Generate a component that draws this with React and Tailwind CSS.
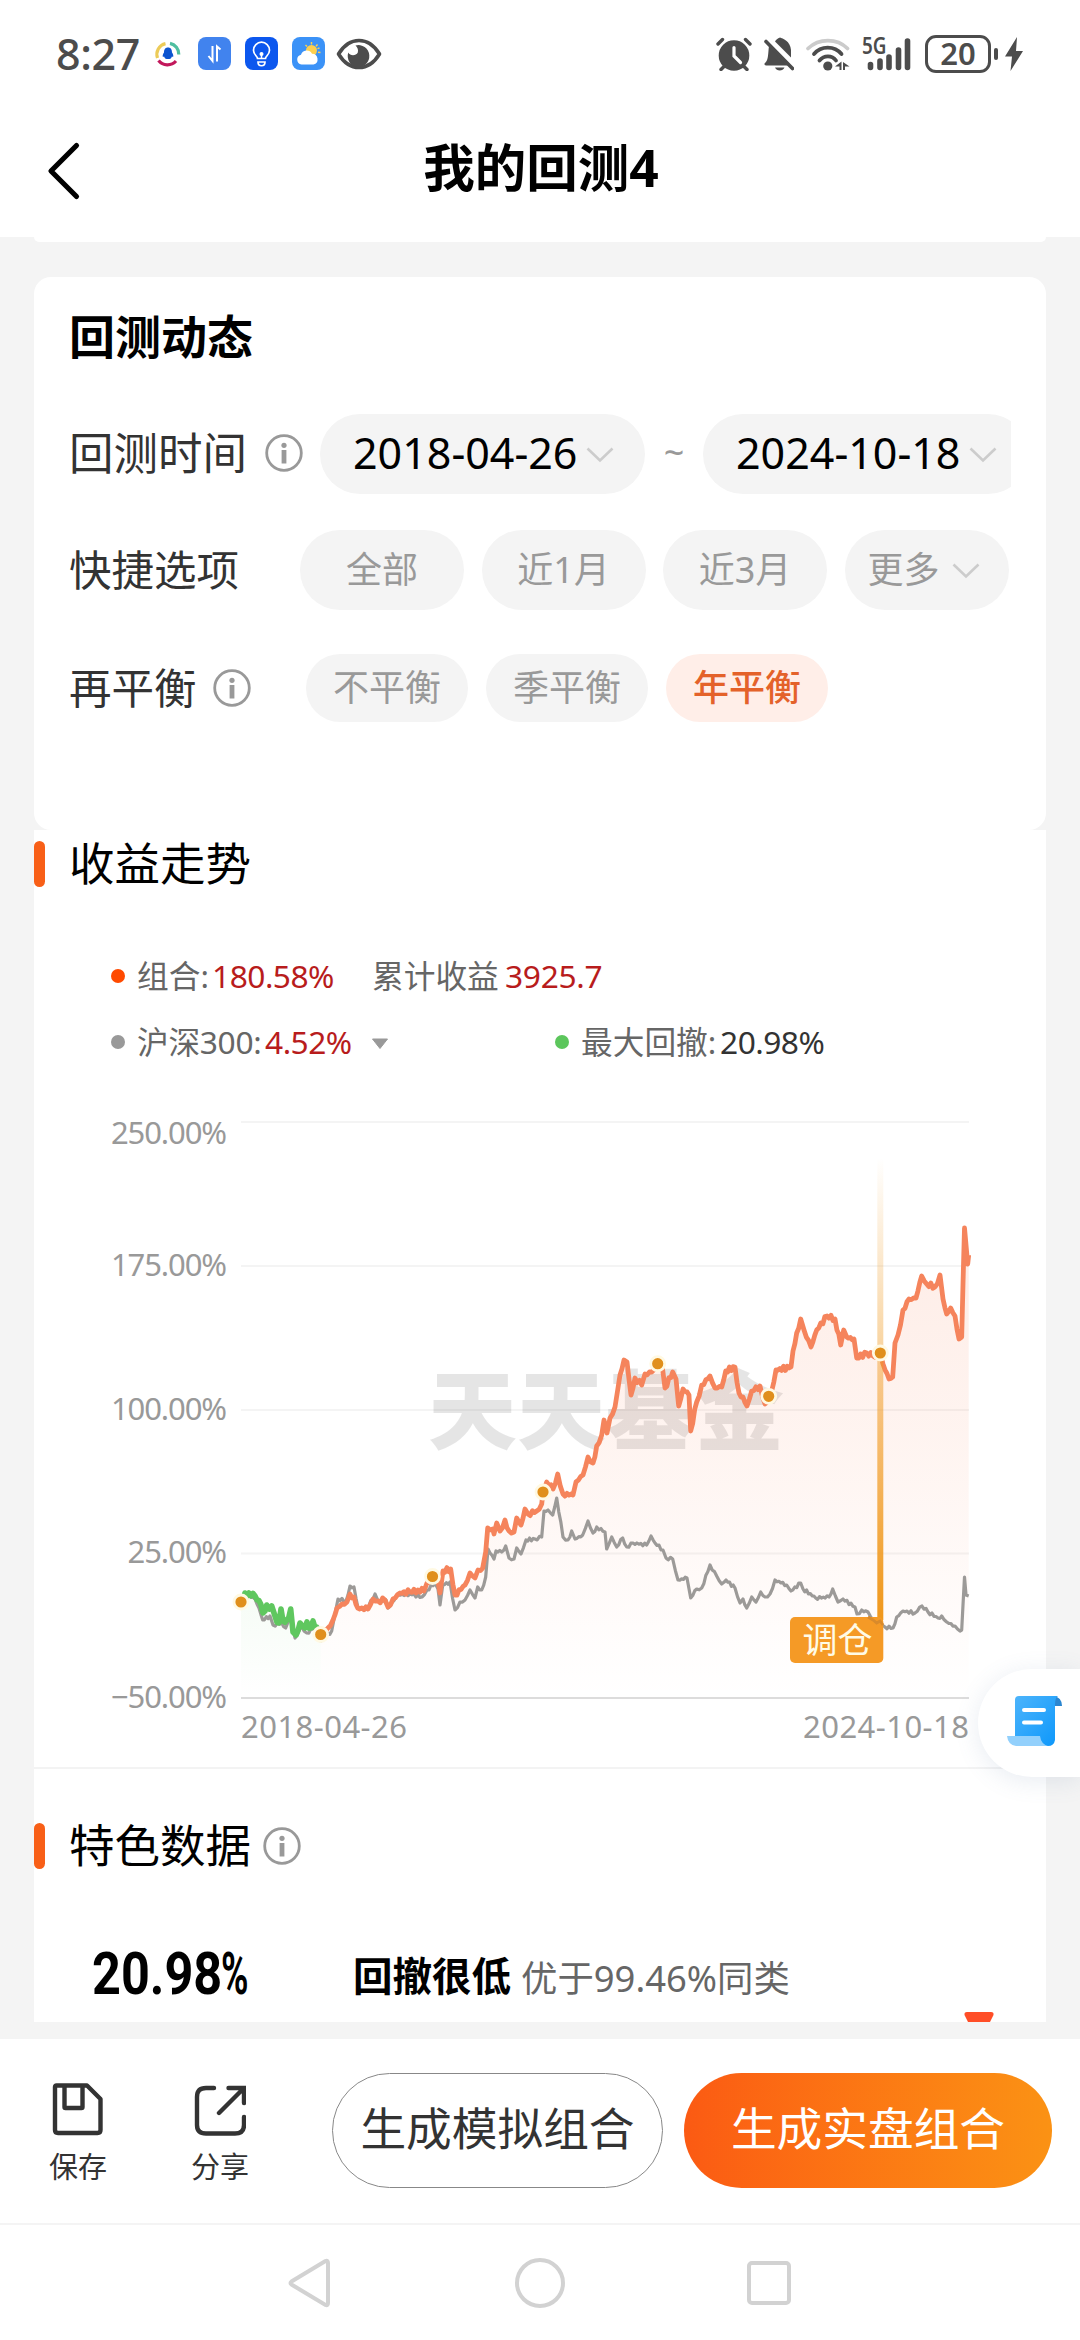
import React from 'react';

// Net value curve of the portfolio during the max drawdown
const drawdown = [
  [241, 1602], [245, 1593], [255, 1596], [260.7, 1604], [263, 1613], [266.7, 1605], [271.7, 1606], [275, 1616],
  [279, 1623], [281, 1609], [283, 1621], [286.7, 1620], [290.7, 1609], [293, 1632], [296, 1635], [300, 1623],
  [305, 1628], [307, 1622], [310.7, 1628], [313, 1621], [316.7, 1627], [320.7, 1634],
];

const portfolio = [
  [320.7, 1634], [328, 1628], [333, 1620], [337, 1608], [342, 1604], [347, 1602], [350, 1594], [354, 1597],
  [357.7, 1608], [368, 1609], [373, 1599], [378, 1601], [385, 1600], [388, 1607], [393, 1599], [400, 1593],
  [410, 1592], [418, 1590], [424, 1591], [427, 1583], [432.5, 1576], [438, 1582], [440, 1593], [443, 1571],
  [450.7, 1569], [455, 1595], [465, 1585], [470, 1573], [475, 1578], [478, 1570], [482.7, 1568], [485.7, 1552],
  [487.7, 1528], [492.7, 1529], [494, 1534], [496.7, 1523], [500, 1531], [505, 1520], [509, 1531], [514, 1532],
  [516.7, 1518], [521, 1525], [525, 1509], [528, 1514], [536.7, 1511], [541.7, 1504], [543, 1492], [546.7, 1482],
  [553, 1489], [557.7, 1474], [563, 1494], [573, 1495], [576, 1482], [583, 1475], [588, 1457], [593, 1463],
  [596.7, 1446], [601.7, 1435], [604, 1420], [607, 1433], [610, 1418], [615, 1407], [618, 1388], [620, 1375],
  [624, 1360], [627, 1362], [631, 1395], [635, 1378], [641.7, 1385], [645, 1374], [651.7, 1372], [657.7, 1364],
  [662.7, 1370], [665, 1388], [672.7, 1372], [676, 1379], [678.7, 1406], [683, 1389], [689, 1395], [690.7, 1431],
  [696.7, 1402], [701.7, 1385], [710, 1376], [715, 1388], [721.7, 1387], [725.7, 1371], [735, 1367], [739, 1393],
  [743, 1397], [747, 1406], [751.7, 1391], [760, 1386], [765, 1404], [768.7, 1396], [771.7, 1391], [776, 1370],
  [791, 1367], [793, 1351], [796.7, 1333], [800.7, 1319], [804, 1330], [811, 1347], [816.7, 1330], [827, 1316],
  [835, 1319], [840.7, 1345], [843.7, 1330], [846.7, 1337], [854, 1339], [856.7, 1358], [866.7, 1353], [873, 1356],
  [880, 1353], [883, 1364], [889, 1379], [892.7, 1377], [895, 1343], [898, 1335], [903, 1310], [909, 1299],
  [916, 1298], [921.7, 1276], [926.7, 1284], [935, 1287], [940, 1275], [943, 1299], [946.7, 1314], [950.7, 1308],
  [955, 1316], [959, 1339], [961.7, 1337], [963, 1284], [964.5, 1228], [966, 1245], [967.7, 1264], [968.7, 1255],
];

const hs300 = [
  [241, 1602], [245, 1594], [255, 1599], [259, 1608], [262.7, 1620], [270, 1616], [273, 1625], [281.7, 1623],
  [285.7, 1628], [290, 1616], [295, 1638], [301.7, 1627], [306.7, 1633], [315, 1627], [320.7, 1641], [331.7, 1631],
  [335, 1614], [338, 1599], [346, 1601], [350, 1586], [354, 1587], [358, 1608], [366.7, 1609], [375, 1594],
  [378, 1601], [386, 1600], [388, 1608], [398, 1595], [410, 1594], [422, 1597], [427, 1590], [435, 1583],
  [438, 1589], [440, 1605], [442.7, 1585], [450, 1582], [452.7, 1599], [455, 1610], [460, 1602], [465, 1600],
  [470, 1590], [475, 1598], [477.7, 1587], [481.7, 1590], [485.7, 1577], [488, 1549], [494, 1559], [496, 1551],
  [501.7, 1552], [505.7, 1546], [509, 1558], [514, 1559], [516.7, 1548], [521, 1554], [526, 1540], [535, 1539],
  [541.7, 1537], [544, 1511], [548, 1510], [552.7, 1515], [556.7, 1498], [563, 1537], [568, 1540], [571.7, 1531],
  [575, 1539], [582.7, 1535], [588, 1521], [593, 1533], [596.7, 1527], [605, 1532], [606.7, 1549], [611.7, 1537],
  [616.7, 1547], [622.7, 1538], [626.7, 1547], [633, 1543], [646.7, 1545], [651, 1536], [655, 1543], [663, 1550],
  [666, 1558], [672.7, 1559], [678, 1580], [687, 1578], [690.7, 1598], [696.7, 1589], [701.7, 1588], [710, 1565],
  [716.7, 1576], [721.7, 1584], [726, 1580], [735, 1588], [740, 1603], [743, 1599], [746.7, 1608], [751.7, 1597],
  [756, 1602], [760.7, 1592], [765, 1597], [770, 1594], [775, 1580], [786.7, 1585], [791, 1591], [800.7, 1583],
  [803, 1589], [815.7, 1598], [829, 1597], [832.7, 1589], [838, 1602], [843, 1599], [855, 1607], [857, 1614],
  [861.7, 1610], [868, 1612], [873, 1620], [876.7, 1623], [880, 1621], [885, 1627], [893, 1628], [896.7, 1617],
  [903, 1611], [915, 1613], [922, 1606], [928, 1612], [938, 1618], [941.7, 1616], [946.7, 1622], [955, 1626],
  [960, 1631], [961.7, 1630], [963, 1605], [964.5, 1577], [966, 1595], [968.7, 1596],
];

const markers = [[241, 1602], [320.7, 1634.5], [432.5, 1576.5], [543, 1492], [657.7, 1363.7], [768.7, 1396.3], [880.3, 1353]];

const yAxis = [
  { label: '250.00%', line: 1122, base: 1144 },
  { label: '175.00%', line: 1266, base: 1276 },
  { label: '100.00%', line: 1410, base: 1419.5 },
  { label: '25.00%', line: 1553.5, base: 1563 },
  { label: '−50.00%', line: 1698, base: 1707.5 },
];

// Daily noise between the sampled points
const toPath = (points, noise) => {
  let d = `M${points[0][0]} ${points[0][1]}`;
  for (let i = 1; i < points.length; i++) {
    const [x0, y0] = points[i - 1];
    const [x1, y1] = points[i];
    const steps = Math.floor((x1 - x0) / 1.8);
    for (let s = 1; s < steps; s++) {
      const t = s / steps;
      const wave = (s % 2 ? 1 : -1) * noise * (0.6 + 0.4 * Math.sin(i * 7.3 + s));
      d += `L${(x0 + (x1 - x0) * t).toFixed(1)} ${(y0 + (y1 - y0) * t + wave).toFixed(1)}`;
    }
    d += `L${x1} ${y1}`;
  }
  return d;
};

const InfoIcon = ({ className }) => (
  <svg viewBox="0 0 38 38" className={`w-[38px] h-[38px] shrink-0 ${className || ''}`}>
    <circle cx="19" cy="19" r="17.3" fill="none" stroke="#999" strokeWidth="2.8" />
    <circle cx="19" cy="11.3" r="2.6" fill="#999" />
    <rect x="16.6" y="16" width="4.8" height="13.5" fill="#999" />
  </svg>
);

const Chevron = ({ className }) => (
  <svg viewBox="0 0 28 16" className={`w-[28px] h-[16px] shrink-0 ${className}`}>
    <path d="M1.5 1.5L14 13.5L26.5 1.5" fill="none" stroke="#ccc" strokeWidth="2.6" />
  </svg>
);

const StatusBar = () => (
  <div className="h-[107px] flex items-center text-[#4c4c4c]">
    <span className="ml-[56px] w-[97px] text-[43px] leading-none tracking-[-0.4px] font-medium">8:27</span>
    <svg viewBox="0 0 30 30" className="w-[30px] h-[30px]">
      <path d="M4.5 19A11 11 0 0 1 12.5 4.6" fill="none" stroke="#eccb58" strokeWidth="3.2" />
      <path d="M17 4.4A11 11 0 0 1 25.8 15.5" fill="none" stroke="#4fbfa0" strokeWidth="3.2" />
      <path d="M5.5 21.5A11.5 11.5 0 0 0 23 22" fill="none" stroke="#c2185b" strokeWidth="3.2" />
      <path d="M15 8.5c-3 0-4 2.3-4 5c-1 1.5-1.6 3-1.2 4.3c.3.5.8 0 1.2-.5c.3 1.2.8 1.7 1.2 2.2c1.6.8 4 .8 5.6 0c.4-.5.9-1 1.2-2.2c.4.5.9 1 1.2.5c.4-1.3-.2-2.8-1.2-4.3c0-2.7-1-5-4-5Z" fill="#0b54d0" />
    </svg>
    <svg viewBox="0 0 33 33" className="ml-[15px] w-[33px] h-[33px]">
      <rect width="33" height="33" rx="8" fill="#4183ee" />
      <path d="M14.5 9v15l-4-5M19 24.5V9.5l3.5 3" fill="none" stroke="#fff" strokeWidth="2" />
    </svg>
    <svg viewBox="0 0 33 33" className="ml-[14px] w-[33px] h-[33px]">
      <rect width="33" height="33" rx="8" fill="#0c57ee" />
      <path d="M12.5 21.5c0-2.5-4-3.5-4-8.3a8 8 0 0 1 16 0c0 4.8-4 5.8-4 8.3ZM13 25c0 5 7 5 7 0Z" fill="none" stroke="#fff" strokeWidth="1.7" />
      <circle cx="16.5" cy="17" r="2" fill="#fff" />
      <path d="M16.5 17v5" stroke="#fff" strokeWidth="1.5" />
    </svg>
    <svg viewBox="0 0 33 33" className="ml-[14px] w-[33px] h-[33px]">
      <rect width="33" height="33" rx="8" fill="#3b92f7" />
      <circle cx="19.5" cy="13.5" r="5.5" fill="#fdd04f" />
      <path d="M19.5 5v2.5M25.5 7.5l-1.5 1.8M28.5 15.5l-2.5-.3M13.5 8l1.5 1.6M27.5 11l-2 .6" stroke="#fdd04f" strokeWidth="1.4" />
      <path d="M9.5 27.5a5 5 0 0 1-.5-9.8a6 6 0 0 1 11-1a5.5 5.5 0 0 1 1.5 10.8Z" fill="#fff" />
    </svg>
    <svg viewBox="0 0 46 34" className="ml-[11px] w-[46px] h-[34px]">
      <path d="M2.5 17C8 8 15 3.5 23 3.5S38 8 43.5 17C38 26 31 30.5 23 30.5S8 26 2.5 17Z" fill="none" stroke="#4c4c4c" strokeWidth="3.6" strokeLinejoin="round" />
      <path d="M19.5 8.5A10.8 11 0 1 1 12.3 15.5C14 19 20 19 21.8 15.5C22.6 13 21.5 10 19.5 8.5Z" fill="#4c4c4c" />
    </svg>

    {/* system icons */}
    <svg viewBox="0 0 36 34" className="ml-[334px] w-[36px] h-[34px]">
      <circle cx="18" cy="18.5" r="15.3" fill="#4c4c4c" />
      <path d="M2 7L6.5 2.5M34 7L29.5 2.5M8 29.5L5 32.5M28 29.5L31 32.5" stroke="#4c4c4c" strokeWidth="3.4" strokeLinecap="round" />
      <path d="M18 10.5V19L24.5 25.5" fill="none" stroke="#fff" strokeWidth="3.2" strokeLinecap="round" />
    </svg>
    <svg viewBox="0 0 30 34" className="ml-[12px] w-[30px] h-[34px]">
      <path d="M11 4.5C12 2.5 13.5 1.5 16 .5C18.5 1.5 26.5 4 27 13V20.5Z" fill="#4c4c4c" />
      <path d="M5 9L24 28.500H2C0 28 0 26.500 1.500 25.500C4.500 23 4 16 5 9Z" fill="#4c4c4c" />
      <path d="M2 4.500L28.500 31.500" stroke="#4c4c4c" strokeWidth="3.6" strokeLinecap="round" />
      <path d="M11 30.500h9.500c-1.500 4-8 4-9.500 0Z" fill="#4c4c4c" />
    </svg>
    <svg viewBox="0 0 46 36" className="ml-[11px] w-[46px] h-[36px]">
      <path d="M3 12.5C14 2 32 2 42.5 12.5" fill="none" stroke="#cbcbcb" strokeWidth="3.8" strokeLinecap="round" />
      <path d="M9 18C16 9.500 29.500 9.500 36.500 18M14.500 24.500C19 19 27 19 31 24.500" fill="none" stroke="#4c4c4c" strokeWidth="3.8" strokeLinecap="round" />
      <circle cx="22.8" cy="30" r="4.6" fill="#4c4c4c" />
      <path d="M30 30.500L36.500 25.500V34H34.500V30.500ZM38 26v8h2v-3.500h4.500Z" fill="#4c4c4c" />
    </svg>
    <div className="relative ml-[10px] w-[52px] h-[36px]">
      <span className="absolute left-[1px] top-[-2px] text-[23px] leading-none font-semibold origin-left scale-x-[0.82]">5G</span>
      <svg viewBox="0 0 52 36" className="w-[52px] h-[36px]">
        <path d="M9.5 28.5v3M19 25v6.500M28 21v10.500M37.500 14v17.500M46.500 5v26.500" stroke="#4c4c4c" strokeWidth="5.6" strokeLinecap="round" />
      </svg>
    </div>
    <div className="ml-[12px] w-[66px] h-[38px] rounded-[11px] border-[3px] border-[#4c4c4c] flex items-center justify-center text-[31px] leading-none font-semibold">
      20
    </div>
    <div className="ml-[3px] w-[4px] h-[12px] rounded-[2px] bg-[#4c4c4c]" />
    <svg viewBox="0 0 18 34" className="ml-[7px] w-[18px] h-[34px]">
      <path d="M12 0L0 19.5H7L5.5 34L18 14H11Z" fill="#4c4c4c" />
    </svg>
  </div>
);

const Pill = ({ children, className }) => (
  <div className={`flex items-center justify-center rounded-full bg-[#f4f4f4] text-[36px] leading-none text-[#999] shrink-0 ${className}`}>
    {children}
  </div>
);

const DatePill = ({ date }) => (
  <div className="w-[325px] h-[80px] shrink-0 rounded-full bg-[#f4f4f4] flex items-center pl-[33px]">
    <span className="w-[233px] text-[43px] leading-none text-black -mt-[3px]">{date}</span>
    <Chevron className="mt-[2px]" />
  </div>
);

const SettingsCard = () => (
  <div className="mx-[34px] h-[553px] rounded-[17px] bg-white px-[35px] pt-[29px]">
    <h2 className="h-[60px] flex items-center text-[46px] font-bold text-black">回测动态</h2>

    <div className="mt-[48px] h-[80px] flex items-center overflow-hidden">
      <span className="text-[44.5px] leading-none text-[#333] w-[196px] shrink-0 -mt-[2px]">回测时间</span>
      <InfoIcon className="-mt-[2px]" />
      <div className="w-[17px] shrink-0" />
      <DatePill date="2018-04-26" />
      <span className="w-[58px] shrink-0 text-center text-[36px] leading-none text-[#999] -mt-[3px]">~</span>
      <DatePill date="2024-10-18" />
    </div>

    <div className="mt-[36px] h-[80px] flex items-center gap-[17.5px]">
      <span className="text-[42.5px] leading-none text-[#333] w-[213.5px] shrink-0">快捷选项</span>
      <Pill className="w-[164px] h-[80px]">全部</Pill>
      <Pill className="w-[164px] h-[80px]">近1月</Pill>
      <Pill className="w-[164px] h-[80px]">近3月</Pill>
      <Pill className="w-[164px] h-[80px] pr-[6px]">
        更多
        <Chevron className="ml-[12px] mt-[2px]" />
      </Pill>
    </div>

    <div className="mt-[44px] h-[68px] flex items-center">
      <span className="text-[42.5px] leading-none text-[#333] w-[144px] shrink-0 whitespace-nowrap">再平衡</span>
      <InfoIcon />
      <div className="ml-[55px] flex gap-[18px]">
        <Pill className="w-[162px] h-[68px]">不平衡</Pill>
        <Pill className="w-[162px] h-[68px]">季平衡</Pill>
        <div className="w-[162px] h-[68px] rounded-full bg-[#ffeee8] flex items-center justify-center text-[36px] leading-none font-medium text-[#e4622a]">
          年平衡
        </div>
      </div>
    </div>
  </div>
);

const SectionTitle = ({ children }) => (
  <div className="h-[46px] flex items-center">
    <div className="w-[11px] h-[46px] rounded-full bg-[#f85f17]" />
    <h2 className="ml-[24px] text-[45.5px] leading-none text-black">{children}</h2>
  </div>
);

const Legend = () => (
  <div className="pl-[77px] text-[31.7px] leading-none text-[#666]">
    <div className="h-[44px] flex items-center">
      <i className="w-[14px] h-[14px] rounded-full bg-[#ff4a00]" />
      <span className="ml-[12px] w-[75px]">组合:</span>
      <span className="w-[160px] text-[#b81c1c] tracking-[-0.5px]">180.58%</span>
      <span className="w-[133px]">累计收益</span>
      <span className="text-[#b81c1c] tracking-[-0.3px]">3925.7</span>
    </div>
    <div className="mt-[22px] h-[44px] flex items-center">
      <i className="w-[14px] h-[14px] rounded-full bg-[#999]" />
      <span className="ml-[12px] w-[128px] tracking-[-0.3px]">沪深300:</span>
      <span className="w-[106px] text-[#b81c1c] tracking-[-0.5px]">4.52%</span>
      <svg viewBox="0 0 18 12" className="w-[18px] h-[12px] mt-[3px]">
        <path d="M1.5 1H16.500L9 10.500Z" fill="#999" stroke="#999" strokeLinejoin="round" />
      </svg>
      <i className="ml-[166px] w-[14px] h-[14px] rounded-full bg-[#5cc65c]" />
      <span className="ml-[12px] w-[139px]">最大回撤:</span>
      <span className="text-[#333] tracking-[-0.5px]">20.98%</span>
    </div>
  </div>
);

const TrendChart = () => {
  const line = toPath(portfolio, 2.4);
  const fall = toPath(drawdown, 4);
  return (
    <svg viewBox="34 1100 1010 667" className="block w-[1010px] h-[667px]">
      <defs>
        <linearGradient id="area" gradientUnits="userSpaceOnUse" x1="0" y1="1228" x2="0" y2="1698">
          <stop offset="0" stopColor="#f2561d" stopOpacity="0.11" />
          <stop offset="0.45" stopColor="#f8561d" stopOpacity="0.065" />
          <stop offset="1" stopColor="#f8561d" stopOpacity="0" />
        </linearGradient>
        <linearGradient id="fallArea" gradientUnits="userSpaceOnUse" x1="0" y1="1590" x2="0" y2="1698">
          <stop offset="0" stopColor="#5cc65c" stopOpacity="0.06" />
          <stop offset="1" stopColor="#5cc65c" stopOpacity="0" />
        </linearGradient>
        <linearGradient id="pole" gradientUnits="userSpaceOnUse" x1="0" y1="1158" x2="0" y2="1617">
          <stop offset="0" stopColor="#f0981c" stopOpacity="0" />
          <stop offset="1" stopColor="#f0981c" />
        </linearGradient>
      </defs>

      {yAxis.map((row, i) => (
        <g key={row.label}>
          <line x1="241" x2="969" y1={row.line} y2={row.line} stroke={i === 4 ? '#dcdcdc' : '#f4f4f4'} strokeWidth="2" />
          <text x="226" y={row.base} textAnchor="end" fontSize="31" letterSpacing="-1.1" fill="#999">{row.label}</text>
        </g>
      ))}
      <text x="241" y="1738" fontSize="31" fill="#999" textLength="166">2018-04-26</text>
      <text x="803" y="1738" fontSize="31" fill="#999" textLength="166">2024-10-18</text>

      <text transform="translate(428 1443) scale(1 0.97)" fontSize="89" fontWeight="900" fill="#000" fillOpacity="0.1" textLength="356">天天基金</text>

      <path d={`${fall}V1698H241Z`} fill="url(#fallArea)" />
      <path d={`${line}V1698H320.7Z`} fill="url(#area)" />
      <path d={toPath(hs300, 1.6)} fill="none" stroke="#9c9a98" strokeWidth="3.2" strokeLinejoin="round" />
      <path d={line} fill="none" stroke="#f5845c" strokeWidth="4.8" strokeLinejoin="round" />
      <path d={fall} fill="none" stroke="#5fc75f" strokeWidth="5.6" strokeLinejoin="round" />

      <rect x="877.3" y="1158" width="6" height="462" fill="url(#pole)" />
      <rect x="790" y="1617" width="93.3" height="46" rx="5" fill="#f59a26" />
      <path d="M868 1617L873 1620L876.7 1623L880 1621L883 1625" fill="none" stroke="#d98a2b" strokeWidth="2.8" />
      <text x="802.5" y="1653" fontSize="35" fill="#fffbe6">调仓</text>

      {markers.map(([x, y]) => (
        <circle key={x} cx={x} cy={y} r="7" fill="#e08f1c" stroke="#fff9e3" strokeWidth="2.8" />
      ))}
    </svg>
  );
};

const FeatureData = () => (
  <div className="h-[130px] pt-[34px] flex items-center overflow-hidden relative">
    <div className="ml-[58px] w-[261px] flex items-center font-['Roboto',sans-serif] font-bold text-black text-[60px] leading-none">
      <span className="inline-block origin-left scale-x-[0.84] w-[129px]">20.98</span>
      <span className="inline-block origin-left scale-x-[0.62]">%</span>
    </div>
    <span className="text-[39.5px] leading-none font-bold text-black mt-[6px]">回撤很低</span>
    <span className="ml-[10px] text-[36.4px] leading-none text-[#666] mt-[9px]">优于99.46%同类</span>
    <svg viewBox="0 0 30 10" className="absolute right-[52px] bottom-0 w-[30px] h-[10px]">
      <path d="M3 0H27Q30 0 29.500 3L26 10H4L.5 3Q0 0 3 0Z" fill="#ff4e27" />
    </svg>
  </div>
);

const BottomBar = () => (
  <div className="h-[184px] bg-white flex items-center">
    <div className="w-[60px] ml-[48px] flex flex-col items-center text-[29px] leading-none text-[#333]">
      <svg viewBox="0 0 52 54" className="w-[52px] h-[54px]">
        <path d="M4.5 3.5H35L48.5 17V48Q48.5 51 45.5 51H6Q3 51 3 48V5Q3 3.5 4.5 3.5Z" fill="none" stroke="#333" strokeWidth="4.4" strokeLinejoin="round" />
        <path d="M12.5 4V25Q12.5 26 13.5 26H29.5Q30.5 26 30.5 25V4" fill="none" stroke="#333" strokeWidth="4.4" />
      </svg>
      <span className="mt-[16px]">保存</span>
    </div>
    <div className="w-[60px] ml-[82px] flex flex-col items-center text-[29px] leading-none text-[#333]">
      <svg viewBox="0 0 52 54" className="w-[52px] h-[54px]">
        <path d="M20 6H12Q3 6 3 15V43Q3 51.500 12 51.500H41Q50 51.500 50 43V35" fill="none" stroke="#333" strokeWidth="4.4" strokeLinecap="round" />
        <path d="M34.500 6H50V21M49 7L25 31" fill="none" stroke="#333" strokeWidth="4.4" strokeLinecap="round" />
      </svg>
      <span className="mt-[16px]">分享</span>
    </div>
    <button className="ml-[82px] -mt-[2px] w-[331px] h-[115px] rounded-full border border-[#888] bg-white text-[45.7px] leading-none text-[#333] pb-[3px]">
      生成模拟组合
    </button>
    <button className="ml-[21px] -mt-[2px] w-[368px] h-[115px] rounded-full bg-linear-to-r from-[#fb5a13] to-[#fb9214] text-[45.7px] leading-none text-white pb-[2px]">
      生成实盘组合
    </button>
  </div>
);

const NavBar = () => (
  <div className="h-[117px] border-t-2 border-[#f4f4f4] bg-white flex items-center">
    <svg viewBox="0 0 44 50" className="ml-[287px] w-[44px] h-[50px]">
      <path d="M38.5 3L4.500 23.500Q2.500 25 4.500 26.500L38.500 47Q41 48 41 45V5Q41 2 38.500 3Z" fill="none" stroke="#d2d2d2" strokeWidth="4" />
    </svg>
    <div className="ml-[184px] w-[50px] h-[50px] rounded-full border-4 border-[#d2d2d2]" />
    <div className="ml-[182px] w-[44px] h-[44px] rounded-[5px] border-4 border-[#d2d2d2]" />
  </div>
);

export default function App() {
  return (
    <div className="relative w-[1080px] h-[2340px] overflow-hidden bg-[#f4f4f4] font-['Noto_Sans','Noto_Sans_CJK_SC',sans-serif]">
      <header className="h-[237px] bg-white">
        <StatusBar />
        <div className="h-[128px] flex items-center">
          <svg viewBox="0 0 34 60" className="ml-[47px] w-[34px] h-[60px]">
            <path d="M29.5 4.5L4 30L29.5 55.5" fill="none" stroke="#000" strokeWidth="5.2" strokeLinecap="round" strokeLinejoin="round" />
          </svg>
          <h1 className="w-[920px] -mt-[6px] text-center text-[51.5px] leading-none font-bold text-black">我的回测4</h1>
        </div>
      </header>
      <div className="mx-[34px] h-[5px] rounded-b-[17px] bg-white mb-[35px]" />

      <SettingsCard />

      <div className="mx-[34px] h-[1192px] bg-white pt-[11px]">
        <SectionTitle>收益走势</SectionTitle>
        <div className="h-[67px]" />
        <Legend />
        <div className="h-[36px]" />
        <TrendChart />
        <div className="h-[2px] bg-[#f3f3f3] mb-[54px]" />
        <SectionTitle>
          <span className="flex items-center gap-[12px]">特色数据<InfoIcon /></span>
        </SectionTitle>
        <div className="h-[23px]" />
        <FeatureData />
      </div>

      <div className="h-[17px]" />
      <BottomBar />
      <NavBar />

      {/* floating report button */}
      <div className="absolute right-0 top-[1669px] w-[102px] h-[108px] rounded-l-full bg-white shadow-[0_4px_24px_rgba(90,120,160,0.14)] flex items-center">
        <svg viewBox="0 0 56 50" className="ml-[29px] -mt-[4px] w-[56px] h-[50px]">
          <defs>
            <linearGradient id="doc" x1="0" y1="0" x2="1" y2="1">
              <stop offset="0" stopColor="#4cb4fb" />
              <stop offset="1" stopColor="#0c97fb" />
            </linearGradient>
          </defs>
          <path d="M46 0Q55 1 55 10H47Z" fill="#2b86d0" />
          <path d="M12 0H51Q48 2 48 8V44Q47 50 41 50H30L8 42V4Q8 0 12 0Z" fill="url(#doc)" />
          <path d="M0 40H33Q34 48 41 50H9Q1 49 0 40Z" fill="#92d0fc" />
          <path d="M17 14H37M17 26.5H34" stroke="#fff" strokeWidth="4" strokeLinecap="round" />
        </svg>
      </div>
    </div>
  );
}
